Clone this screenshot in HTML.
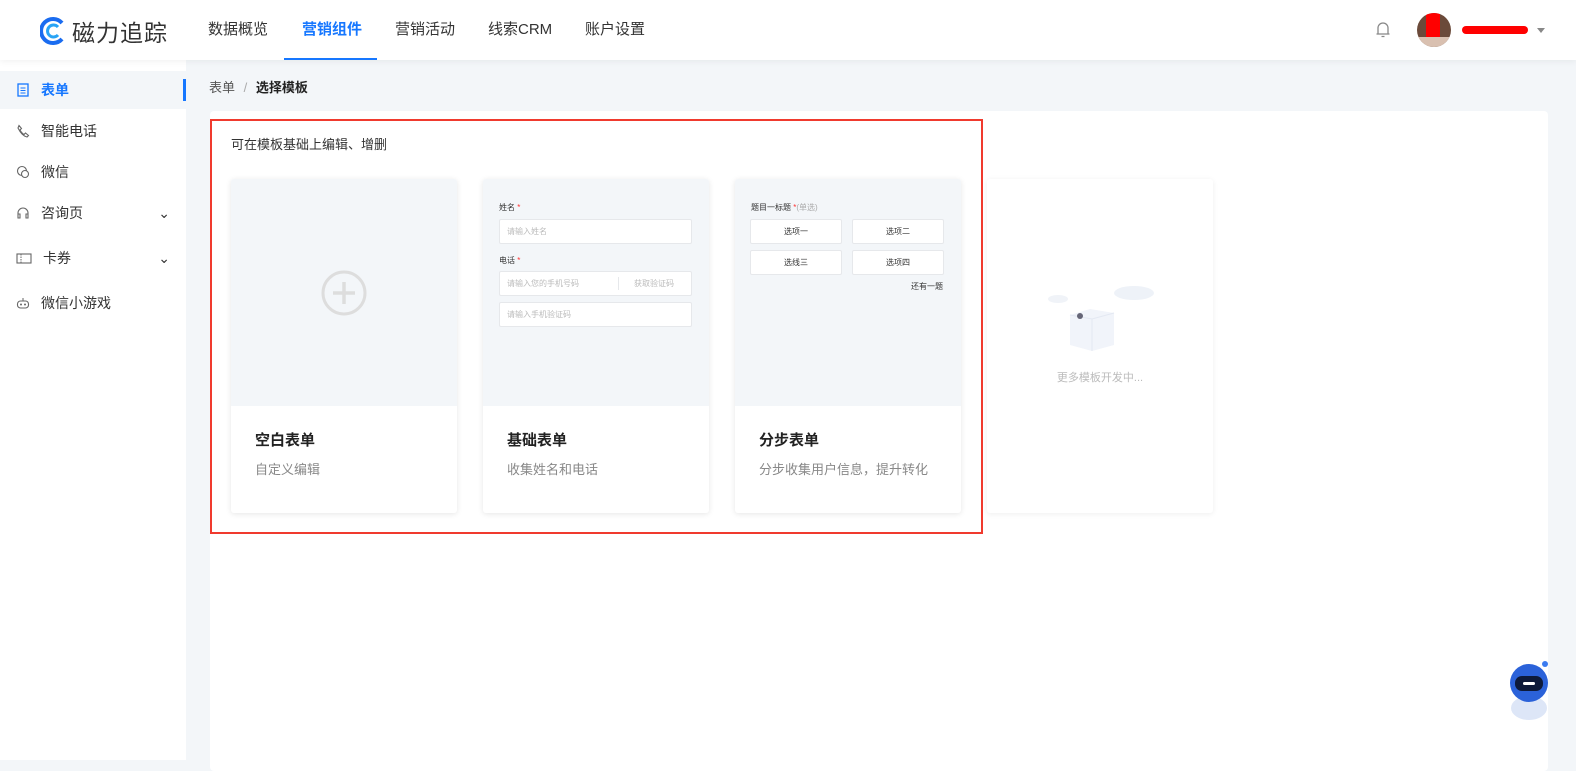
<!DOCTYPE html>
<html><head><meta charset="utf-8"><style>
*{margin:0;padding:0;box-sizing:border-box}
body{width:1576px;height:760px;overflow:hidden;background:#f3f6f9;font-family:"Liberation Sans","Noto Sans CJK SC",sans-serif;color:#333;position:relative}
.hdr{position:absolute;left:0;top:0;width:1576px;height:60px;background:#fff;box-shadow:0 2px 6px rgba(0,0,0,.05);z-index:2}
.logo{position:absolute;left:40px;top:14px;display:flex;align-items:center}
.logo span{font-size:23px;color:#333;margin-left:6px;letter-spacing:1px}
.nav{position:absolute;top:0;font-size:15px;line-height:60px;color:#333}
.nav.act{color:#1677ff;font-weight:bold}
.side{position:absolute;left:0;top:60px;width:186px;height:700px;background:#fff}
.it{position:absolute;left:0;width:186px;height:38px;display:flex;align-items:center;padding-left:16px;font-size:14px;color:#333}
.it svg{margin-right:11px}
.it .ch{position:absolute;right:16px}
.panel{position:absolute;left:210px;top:111px;width:1338px;height:660px;background:#fff;border-radius:4px}
.red{position:absolute;left:210px;top:119px;width:773px;height:415px;border:2px solid #f03a2e}
.card{position:absolute;top:179px;width:226px;height:334px;background:#fff;box-shadow:0 1px 6px rgba(0,0,0,.1);border-radius:3px;overflow:hidden}
.card .top{height:227px;background:#f3f6f9;position:relative}
.card h3{position:absolute;left:24px;top:250px;font-size:15px;font-weight:bold;color:#222}
.card p{position:absolute;left:24px;top:280px;font-size:13px;color:#888}
.inp{position:absolute;left:16px;width:193px;height:25px;background:#fff;border:1px solid #e6e8eb;border-radius:2px;font-size:8px;color:#bbb;line-height:23px;padding-left:7px}
.lb{position:absolute;left:16px;font-size:8px;color:#333}
.lb i{color:#f33;font-style:normal}
.op{position:absolute;width:92px;height:25px;background:#fff;border:1px solid #e6e8eb;border-radius:2px;font-size:8px;text-align:center;line-height:23px;color:#333}
</style></head><body>
<div class="hdr">
 <div class="logo"><svg width="26" height="30" viewBox="0 0 26 30"><path d="M22 7A12 12 0 1 0 22 23" fill="none" stroke="#1a6cf0" stroke-width="4"/><path d="M18 11A6 6 0 1 0 18 19" fill="none" stroke="#29a4f5" stroke-width="3"/></svg><span>磁力追踪</span></div>
 <div class="nav" style="left:208px">数据概览</div>
 <div class="nav act" style="left:302px">营销组件</div>
 <div style="position:absolute;left:284px;top:58px;width:93px;height:2px;background:#1677ff"></div>
 <div class="nav" style="left:395px">营销活动</div>
 <div class="nav" style="left:488px">线索CRM</div>
 <div class="nav" style="left:585px">账户设置</div>
 <svg style="position:absolute;left:1374px;top:20px" width="18" height="19" viewBox="0 0 18 19"><path d="M4 14V8a5 5 0 0 1 10 0v6M2.5 14h13M7.5 16.5h3" fill="none" stroke="#888" stroke-width="1.3"/></svg>
 <div style="position:absolute;left:1417px;top:13px;width:34px;height:34px;border-radius:50%;background:#6b4a3a;overflow:hidden"><div style="position:absolute;left:9px;top:0;width:14px;height:26px;background:#f00"></div><div style="position:absolute;left:0;top:24px;width:34px;height:10px;background:#d9c0b0"></div></div>
 <div style="position:absolute;left:1462px;top:26px;width:66px;height:8px;background:#f00;border-radius:4px"></div>
 <div style="position:absolute;left:1537px;top:28px;border:4px solid transparent;border-top:5px solid #888"></div>
</div>
<div class="side">
 <div class="it" style="top:11px;background:#f3f6f9;color:#1677ff;font-weight:bold"><svg width="14" height="14" viewBox="0 0 14 14"><rect x="2" y="1" width="10" height="12" fill="none" stroke="#1677ff" stroke-width="1.3"/><path d="M4.5 5h5M4.5 7.5h5M4.5 10h5" stroke="#1677ff"/></svg>表单<div style="position:absolute;right:0;top:8px;width:3px;height:22px;background:#1677ff"></div></div>
 <div class="it" style="top:52px"><svg width="14" height="14" viewBox="0 0 14 14"><path d="M3 1.5l2.5 3-1.5 1.5q1.5 3 4 4.5l1.5-1.5 3 2.5-1.5 1.5Q6 12 2 4z" fill="none" stroke="#666" stroke-width="1.1"/></svg>智能电话</div>
 <div class="it" style="top:93px"><svg width="14" height="14" viewBox="0 0 14 14"><circle cx="6" cy="6" r="4.5" fill="none" stroke="#666" stroke-width="1.1"/><circle cx="9" cy="9" r="3.5" fill="#fff" stroke="#666" stroke-width="1.1"/></svg>微信</div>
 <div class="it" style="top:134px"><svg width="14" height="14" viewBox="0 0 14 14"><path d="M2 10V7a5 5 0 0 1 10 0v3M2 8h2v4H2zM10 8h2v4h-2z" fill="none" stroke="#666" stroke-width="1.1"/></svg>咨询页<span class="ch">⌄</span></div>
 <div class="it" style="top:179px"><svg width="16" height="14" viewBox="0 0 16 14"><rect x="1" y="3" width="14" height="9" fill="none" stroke="#666" stroke-width="1.1"/><path d="M5 3v9" stroke="#666" stroke-dasharray="1.5 1"/></svg>卡券<span class="ch">⌄</span></div>
 <div class="it" style="top:224px"><svg width="14" height="14" viewBox="0 0 14 14"><rect x="1.5" y="5" width="11" height="7" rx="3" fill="none" stroke="#666" stroke-width="1.1"/><path d="M7 5V2" stroke="#666"/><circle cx="5" cy="8.5" r="1" fill="#666"/><circle cx="9" cy="8.5" r="1" fill="#666"/></svg>微信小游戏</div>
</div>
<div style="position:absolute;left:209px;top:77px;font-size:13px;color:#555">表单 <span style="color:#aaa;margin:0 5px">/</span> <b style="color:#222">选择模板</b></div>
<div class="panel"></div>
<div class="red"></div>
<div style="position:absolute;left:231px;top:134px;font-size:13px;color:#333">可在模板基础上编辑、增删</div>
<div class="card" style="left:231px"><div class="top"><svg style="position:absolute;left:89px;top:90px" width="48" height="48" viewBox="0 0 48 48"><circle cx="24" cy="24" r="21" fill="none" stroke="#ddd" stroke-width="3"/><path d="M24 13v22M13 24h22" stroke="#ddd" stroke-width="3.5"/></svg></div><h3>空白表单</h3><p>自定义编辑</p></div>
<div class="card" style="left:483px"><div class="top">
 <div class="lb" style="top:23px">姓名 <i>*</i></div>
 <div class="inp" style="top:40px">请输入姓名</div>
 <div class="lb" style="top:76px">电话 <i>*</i></div>
 <div class="inp" style="top:92px">请输入您的手机号码<span style="position:absolute;left:118px;top:5px;height:13px;border-left:1px solid #e6e8eb"></span><span style="position:absolute;left:134px">获取验证码</span></div>
 <div class="inp" style="top:123px">请输入手机验证码</div>
</div><h3>基础表单</h3><p>收集姓名和电话</p></div>
<div class="card" style="left:735px"><div class="top">
 <div class="lb" style="top:23px">题目一标题 <i>*</i><span style="color:#aaa">(单选)</span></div>
 <div class="op" style="left:15px;top:40px">选项一</div>
 <div class="op" style="left:117px;top:40px">选项二</div>
 <div class="op" style="left:15px;top:71px">选线三</div>
 <div class="op" style="left:117px;top:71px">选项四</div>
 <div style="position:absolute;right:18px;top:102px;font-size:8px;color:#333">还有一题</div>
</div><h3>分步表单</h3><p>分步收集用户信息，提升转化</p></div>
<div class="card" style="left:987px;box-shadow:0 1px 6px rgba(0,0,0,.07)">
 <svg style="position:absolute;left:55px;top:100px" width="120" height="80" viewBox="0 0 120 80"><ellipse cx="92" cy="14" rx="20" ry="7" fill="#eef2f8"/><ellipse cx="16" cy="20" rx="10" ry="4" fill="#f0f3f8"/><path d="M28 36l20-6 24 4v32l-22 6-22-6z" fill="#f1f4fa"/><path d="M28 36l22 4 22-6M50 40v32" stroke="#e3e8f2" fill="none"/><circle cx="38" cy="37" r="3" fill="#667"/></svg>
 <div style="position:absolute;left:0;width:100%;top:190px;text-align:center;font-size:11px;color:#bbb">更多模板开发中...</div>
</div>
<svg style="position:absolute;left:1505px;top:656px" width="50" height="66" viewBox="0 0 50 66"><ellipse cx="24" cy="52" rx="18" ry="12" fill="#dde6f7"/><circle cx="24" cy="27" r="19" fill="#2b62d9"/><rect x="10" y="20" width="28" height="15" rx="7" fill="#0d1a3a"/><rect x="18" y="26" width="12" height="3" rx="1.5" fill="#fff"/><circle cx="40" cy="8" r="3" fill="#3b7bf0"/></svg>
</body></html>
